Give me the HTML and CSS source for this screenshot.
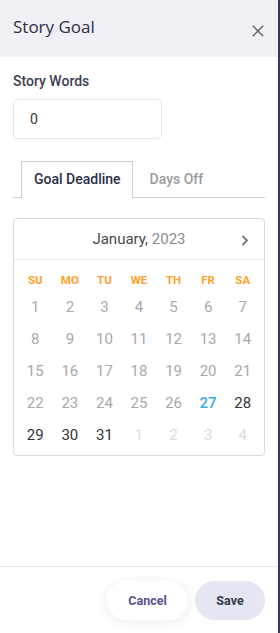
FILE: index.html
```html
<!DOCTYPE html>
<html>
<head>
<meta charset="utf-8">
<link rel="stylesheet" href="styles.css">
</head>
<body>
<div class="dialog">
  <div class="header">
    <div class="title">Story Goal</div>
    <button class="close" aria-label="Close">
      <svg width="12" height="12" viewBox="0 0 12 12"><path d="M0.8 0.8 L11.2 11.2 M11.2 0.8 L0.8 11.2" stroke="#5f5f66" stroke-width="1.4" fill="none"/></svg>
    </button>
  </div>
  <div class="content">
    <div class="label">Story Words</div>
    <div class="input">0</div>
    <div class="tabs">
      <div class="tab active">Goal Deadline</div>
      <div class="tab">Days Off</div>
    </div>
    <div class="calendar">
      <div class="cal-head">
        <span class="month">January,</span>&nbsp;<span class="year">2023</span>
        <svg class="next" width="8" height="11" viewBox="0 0 8 11"><path d="M1.5 1 L6 5.5 L1.5 10" stroke="#77777a" stroke-width="1.8" fill="none"/></svg>
      </div>
      <div class="grid">
        <div class="wd">SU</div><div class="wd">MO</div><div class="wd">TU</div><div class="wd">WE</div><div class="wd">TH</div><div class="wd">FR</div><div class="wd">SA</div>
        <div class="d past">1</div><div class="d past">2</div><div class="d past">3</div><div class="d past">4</div><div class="d past">5</div><div class="d past">6</div><div class="d past">7</div>
        <div class="d past">8</div><div class="d past">9</div><div class="d past">10</div><div class="d past">11</div><div class="d past">12</div><div class="d past">13</div><div class="d past">14</div>
        <div class="d past">15</div><div class="d past">16</div><div class="d past">17</div><div class="d past">18</div><div class="d past">19</div><div class="d past">20</div><div class="d past">21</div>
        <div class="d past">22</div><div class="d past">23</div><div class="d past">24</div><div class="d past">25</div><div class="d past">26</div><div class="d today">27</div><div class="d">28</div>
        <div class="d">29</div><div class="d">30</div><div class="d">31</div><div class="d other">1</div><div class="d other">2</div><div class="d other">3</div><div class="d other">4</div>
      </div>
    </div>
  </div>
  <div class="footer">
    <button class="btn cancel">Cancel</button>
    <button class="btn save">Save</button>
  </div>
</div>
</body>
</html>
```
FILE: styles.css
```css
html, body {
  margin: 0;
  padding: 0;
}
body {
  background: #3d3654;
  width: 280px;
  height: 633px;
  overflow: hidden;
  font-family: Roboto, "Liberation Sans", sans-serif;
}
.dialog {
  width: 278px;
  height: 633px;
  background: #ffffff;
  display: flex;
  flex-direction: column;
}
.header {
  height: 57px;
  box-sizing: border-box;
  background: #f2f0f7;
  display: flex;
  justify-content: space-between;
  align-items: flex-start;
  padding: 15px 14px 0 13px;
}
.title {
  font-family: "Open Sans", "Noto Sans", sans-serif;
  font-size: 17px;
  line-height: 24px;
  color: #2c2f45;
}
.close {
  border: 0;
  background: none;
  padding: 0;
  margin-top: 10px;
  width: 12px;
  height: 12px;
  display: block;
}
.close svg { display: block; }
.content {
  flex: 1;
  padding: 14px 13px 0 13px;
}
.label {
  font-size: 14px;
  line-height: 20px;
  font-weight: 500;
  color: #3a3f55;
}
.input {
  margin-top: 8px;
  width: 149px;
  height: 40px;
  box-sizing: border-box;
  border: 1px solid #e6e6e9;
  border-radius: 5px;
  padding-left: 16px;
  font-size: 14px;
  line-height: 38px;
  color: #333;
}
.tabs {
  margin-top: 22px;
  display: flex;
  border-bottom: 1px solid #cfcfd2;
  padding-left: 8px;
  height: 36px;
}
.tab {
  font-size: 14px;
  font-weight: 500;
  line-height: 36px;
  color: #9a9a9e;
  padding: 0 17px;
}
.tab.active {
  color: #2c2f45;
  border: 1px solid #cfcfd2;
  border-bottom: 0;
  background: #fff;
  padding: 0 11px 0 12px;
  height: 37px;
  box-sizing: border-box;
  line-height: 35px;
  margin-bottom: -1px;
}
.calendar {
  margin-top: 20px;
  border: 1px solid #d9d9dc;
  border-radius: 4px;
  padding-bottom: 4px;
}
.cal-head {
  height: 40px;
  border-bottom: 1px solid #ececef;
  display: flex;
  justify-content: center;
  align-items: center;
  position: relative;
  font-size: 15px;
}
.month { color: #48484c; }
.year { color: #8c8c90; }
.next {
  position: absolute;
  right: 15px;
  top: 16px;
}
.grid {
  display: grid;
  grid-template-columns: repeat(7, 1fr);
  padding: 9px 4px 0 4px;
}
.wd {
  height: 22px;
  line-height: 22px;
  text-align: center;
  font-size: 11.5px;
  font-weight: 700;
  color: #ffa12b;
}
.d {
  height: 32px;
  line-height: 32px;
  text-align: center;
  font-size: 15px;
  color: #333336;
}
.d.past { color: #a8a8ab; }
.d.today { color: #3aa8e8; font-weight: 500; }
.d.other { color: #dcdcde; }
.footer {
  border-top: 1px solid #e8e8ea;
  padding: 14px 13px 13px 13px;
  display: flex;
  justify-content: flex-end;
  gap: 7px;
}
.btn {
  height: 39px;
  border: 0;
  border-radius: 20px;
  font-family: Roboto, "Liberation Sans", sans-serif;
  font-weight: 700;
  font-size: 12.5px;
}
.cancel {
  width: 81px;
  background: #ffffff;
  color: #5a4e8c;
  box-shadow: 0 2px 12px rgba(40, 30, 80, 0.09);
}
.save {
  width: 70px;
  background: #e4e7f1;
  color: #34384f;
}
```
